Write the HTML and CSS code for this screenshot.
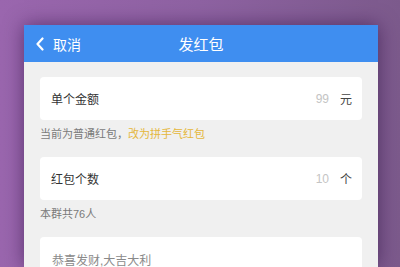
FILE: index.html
```html
<!DOCTYPE html>
<html>
<head>
<meta charset="utf-8">
<link rel="stylesheet" href="styles.css">
</head>
<body>
<div class="stage">
  <div class="phone">
    <div class="header">
      <div class="back">
        <svg class="chev" width="10" height="14" viewBox="0 0 10 14"><polyline points="7.5,1.5 2.5,7 7.5,12.5" fill="none" stroke="#fff" stroke-width="2.2" stroke-linecap="round" stroke-linejoin="round"/></svg>
        <span>取消</span>
      </div>
      <div class="title">发红包</div>
    </div>
    <div class="content">
      <div class="card row">
        <span class="label">单个金额</span>
        <span class="val">99</span>
        <span class="unit">元</span>
      </div>
      <div class="note">当前为普通红包，<span class="link">改为拼手气红包</span></div>
      <div class="card row">
        <span class="label">红包个数</span>
        <span class="val">10</span>
        <span class="unit">个</span>
      </div>
      <div class="note">本群共76人</div>
      <div class="card msg">恭喜发财,大吉大利</div>
    </div>
  </div>
</div>
</body>
</html>
```
FILE: styles.css
```css
html, body {
  margin: 0;
  padding: 0;
  width: 400px;
  height: 267px;
  overflow: hidden;
}
body {
  background: linear-gradient(90deg, #9a66ae 0%, #8e62a2 50%, #7c5a8c 100%);
  font-family: "Liberation Sans", "Noto Sans CJK SC", sans-serif;
}
.stage {
  padding: 25px 0 0 24px;
}
.phone {
  width: 354px;
  height: 242px;
  overflow: hidden;
  background: #f0f0f0;
  box-shadow: 0 0 18px rgba(40, 10, 60, 0.55);
}
.header {
  height: 37px;
  background: #3f8ef0;
  display: flex;
  align-items: center;
  position: relative;
  color: #fff;
}
.back {
  display: flex;
  align-items: center;
  padding-left: 11px;
  font-size: 14px;
  gap: 8px;
}
.chev { display: block; }
.title {
  position: absolute;
  left: 0;
  right: 0;
  text-align: center;
  font-size: 15px;
  pointer-events: none;
}
.content {
  padding: 15px 16px 0 16px;
}
.card {
  background: #fff;
  border-radius: 4px;
}
.row {
  height: 43px;
  display: flex;
  align-items: center;
  padding: 0 10px 0 11px;
  font-size: 12px;
  color: #333;
}
.label { flex: 1; }
.val {
  color: #c4c4c4;
  margin-right: 11px;
}
.unit { color: #444; }
.note {
  padding: 7px 0 16px 0;
  line-height: 14px;
  font-size: 11px;
  color: #7a7a7a;
}
.link { color: #e5b73b; }
.msg {
  height: 60px;
  padding: 14px 12px 0 12px;
  font-size: 12px;
  color: #8a8a8a;
  box-sizing: border-box;
}
```
